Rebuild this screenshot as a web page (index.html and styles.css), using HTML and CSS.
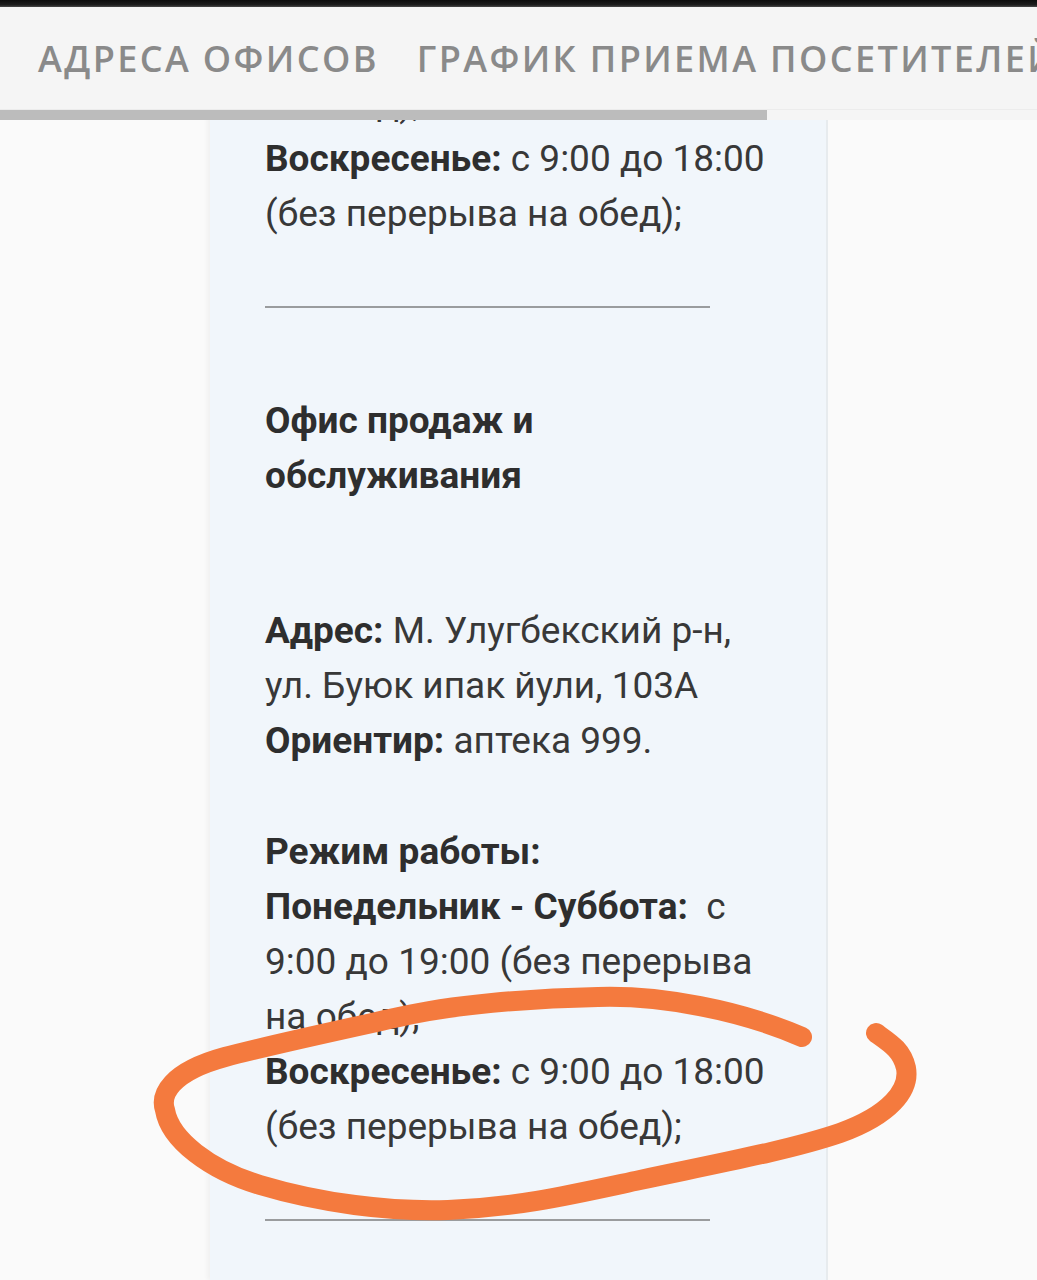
FILE: index.html
```html
<!DOCTYPE html>
<html lang="ru">
<head>
<meta charset="utf-8">
<title>График приема посетителей</title>
<link rel="stylesheet" href="styles.css">
</head>
<body>
<header class="topbar">
  <div class="status-strip"></div>
  <nav class="tabs">
    <span class="tab">АДРЕСА ОФИСОВ</span>
    <span class="tab">ГРАФИК ПРИЕМА ПОСЕТИТЕЛЕЙ</span>
  </nav>
  <div class="indicator-track"><div class="indicator"></div></div>
</header>

<main class="page">
  <section class="card">
    <p class="block first">на обед);<br>
      <b>Воскресенье:</b> с 9:00 до 18:00<br>
      (без перерыва на обед);</p>
    <hr class="rule">
    <h3 class="office">Офис продаж и обслуживания</h3>
    <p class="block address"><b>Адрес:</b> М. Улугбекский р-н, ул. Буюк ипак йули, 103А<br>
      <b>Ориентир:</b> аптека 999.</p>
    <p class="block schedule"><b>Режим работы:</b><br>
      <b>Понедельник - Суббота:</b>&nbsp; с 9:00 до 19:00 (без перерыва на обед);<br>
      <b>Воскресенье:</b> с 9:00 до 18:00<br>
      (без перерыва на обед);</p>
    <hr class="rule">
  </section>
</main>

<svg class="scribble" width="1037" height="1280" viewBox="0 0 1037 1280" aria-hidden="true">
  <path d="M802,1037 C740,1010 660,995 598,997 C530,998 450,1005 399,1017 C340,1030 270,1045 225,1057 C170,1072 160,1095 165,1110 C170,1140 210,1170 260,1185 C320,1203 390,1212 448,1210 C520,1207 570,1195 640,1180 C720,1163 790,1150 840,1133 C890,1115 910,1090 906,1068 C902,1050 890,1043 876,1033" fill="none" stroke="#f47a3e" stroke-width="20" stroke-linecap="round" stroke-linejoin="round"/>
</svg>
</body>
</html>
```
FILE: styles.css
```css
html, body {
  margin: 0;
  padding: 0;
}
body {
  background: #fafafa;
  font-family: Roboto, "Noto Sans", Arial, sans-serif;
  color: #383838;
  width: 1037px;
  height: 1280px;
  overflow: hidden;
}

.topbar {
  position: fixed;
  top: 0;
  left: 0;
  right: 0;
  z-index: 5;
  background: #f5f5f5;
}
.status-strip {
  height: 7px;
  background: linear-gradient(#0d0d0d, #1e1e1e 70%, #4a4a4a);
}
.tabs {
  height: 102px;
  display: flex;
  align-items: center;
  gap: 38px;
  padding-left: 38px;
  white-space: nowrap;
  overflow: hidden;
  font-family: "Open Sans", "Noto Sans", sans-serif;
  font-size: 36px;
  font-weight: 600;
  letter-spacing: 2.4px;
  color: #8a8a8a;
}
.tab {
  flex: none;
}
.indicator-track {
  height: 11px;
  border-top: 1px solid #ececec;
  box-sizing: border-box;
}
.indicator {
  width: 767px;
  height: 100%;
  background: #bcbcbc;
}

.page {
  display: flex;
}
.card {
  margin-left: 210px;
  width: 618px;
  box-sizing: border-box;
  height: 1280px;
  overflow: hidden;
  padding: 76px 55px 0 55px;
  background: #f1f6fb;
  border-right: 2px solid #e7ebee;
  box-shadow: -3px 0 4px rgba(0,0,0,0.04);
  font-size: 37px;
  line-height: 55px;
}
.card b, .office {
  font-weight: 700;
  color: #2e2e2e;
}
.block {
  margin: 0;
}
.rule {
  width: 445px;
  margin: 65px 0 0 0;
  border: 0;
  height: 2px;
  background: #9a9c9e;
}
.office {
  margin: 85px 0 0 0;
  font-size: 37px;
  line-height: 55px;
}
.address {
  margin-top: 100px;
}
.schedule {
  margin-top: 56px;
}

.scribble {
  position: absolute;
  top: 0;
  left: 0;
  z-index: 3;
  pointer-events: none;
}
```
